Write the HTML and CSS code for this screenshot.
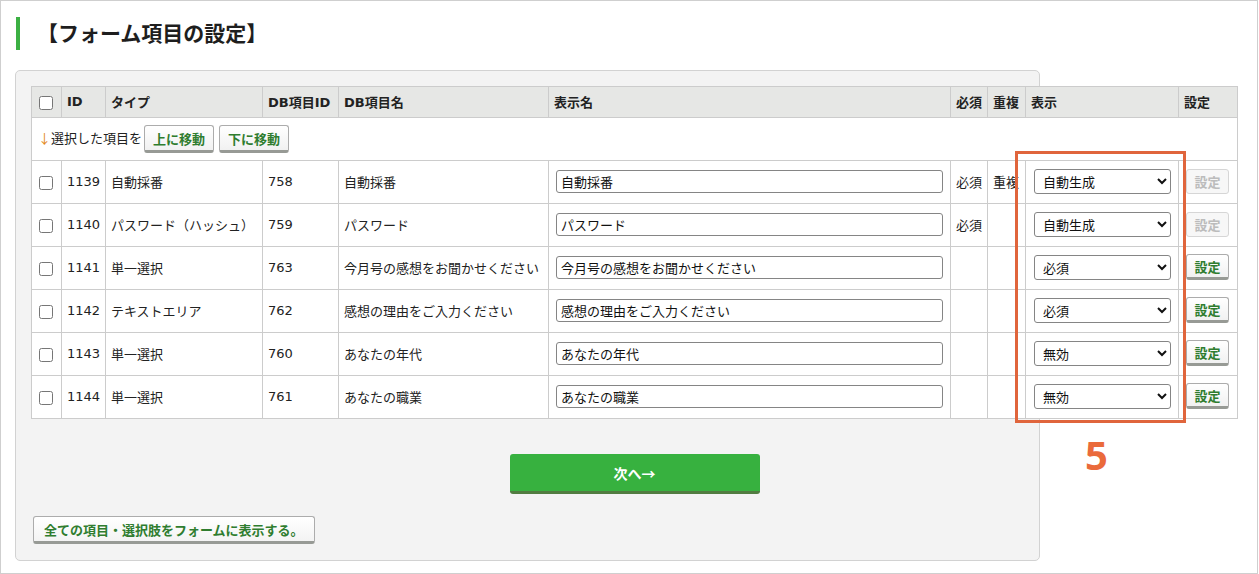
FILE: index.html
```html
<!DOCTYPE html>
<html lang="ja">
<head>
<meta charset="utf-8">
<title>フォーム項目の設定</title>
<link rel="stylesheet" href="styles.css">
</head>
<body>
<div class="frame">
  <h2 class="heading">【フォーム項目の設定】</h2>
  <div class="panel">
    <div class="inner">
      <table class="items">
        <colgroup>
          <col class="c-chk"><col class="c-id"><col class="c-type"><col class="c-dbid"><col class="c-dbname"><col class="c-label"><col class="c-req"><col class="c-dup"><col class="c-show"><col class="c-set">
        </colgroup>
        <thead>
          <tr>
            <th class="chk"><input type="checkbox"></th>
            <th>ID</th>
            <th>タイプ</th>
            <th>DB項目ID</th>
            <th>DB項目名</th>
            <th>表示名</th>
            <th>必須</th>
            <th>重複</th>
            <th>表示</th>
            <th>設定</th>
          </tr>
        </thead>
        <tbody>
          <tr class="move-row">
            <td colspan="10"><span class="arrow">↓</span>選択した項目を<button class="btn-move" type="button">上に移動</button><button class="btn-move" type="button">下に移動</button></td>
          </tr>
          <tr>
            <td class="chk"><input type="checkbox"></td>
            <td>1139</td>
            <td>自動採番</td>
            <td>758</td>
            <td>自動採番</td>
            <td class="lbl"><input class="txt" type="text" value="自動採番"></td>
            <td>必須</td>
            <td>重複</td>
            <td class="show"><select class="sel"><option>自動生成</option></select></td>
            <td class="set"><button class="btn-set" type="button" disabled>設定</button></td>
          </tr>
          <tr>
            <td class="chk"><input type="checkbox"></td>
            <td>1140</td>
            <td>パスワード（ハッシュ）</td>
            <td>759</td>
            <td>パスワード</td>
            <td class="lbl"><input class="txt" type="text" value="パスワード"></td>
            <td>必須</td>
            <td></td>
            <td class="show"><select class="sel"><option>自動生成</option></select></td>
            <td class="set"><button class="btn-set" type="button" disabled>設定</button></td>
          </tr>
          <tr>
            <td class="chk"><input type="checkbox"></td>
            <td>1141</td>
            <td>単一選択</td>
            <td>763</td>
            <td>今月号の感想をお聞かせください</td>
            <td class="lbl"><input class="txt" type="text" value="今月号の感想をお聞かせください"></td>
            <td></td>
            <td></td>
            <td class="show"><select class="sel"><option>必須</option></select></td>
            <td class="set"><button class="btn-set" type="button">設定</button></td>
          </tr>
          <tr>
            <td class="chk"><input type="checkbox"></td>
            <td>1142</td>
            <td>テキストエリア</td>
            <td>762</td>
            <td>感想の理由をご入力ください</td>
            <td class="lbl"><input class="txt" type="text" value="感想の理由をご入力ください"></td>
            <td></td>
            <td></td>
            <td class="show"><select class="sel"><option>必須</option></select></td>
            <td class="set"><button class="btn-set" type="button">設定</button></td>
          </tr>
          <tr>
            <td class="chk"><input type="checkbox"></td>
            <td>1143</td>
            <td>単一選択</td>
            <td>760</td>
            <td>あなたの年代</td>
            <td class="lbl"><input class="txt" type="text" value="あなたの年代"></td>
            <td></td>
            <td></td>
            <td class="show"><select class="sel"><option>無効</option></select></td>
            <td class="set"><button class="btn-set" type="button">設定</button></td>
          </tr>
          <tr>
            <td class="chk"><input type="checkbox"></td>
            <td>1144</td>
            <td>単一選択</td>
            <td>761</td>
            <td>あなたの職業</td>
            <td class="lbl"><input class="txt" type="text" value="あなたの職業"></td>
            <td></td>
            <td></td>
            <td class="show"><select class="sel"><option>無効</option></select></td>
            <td class="set"><button class="btn-set" type="button">設定</button></td>
          </tr>
        </tbody>
      </table>
      <div class="next-wrap">
        <button class="btn-next" type="button">次へ→</button>
      </div>
      <button class="btn-all" type="button">全ての項目・選択肢をフォームに表示する。</button>
    </div>
  </div>
  <div class="highlight"></div>
  <div class="step-num">5</div>
</div>
</body>
</html>
```

FILE: styles.css
```css
html, body {
  margin: 0;
  padding: 0;
  background: #ffffff;
}

body {
  font-family: "DejaVu Sans", "Noto Sans CJK JP", sans-serif;
  font-size: 13px;
  color: #222222;
}

.frame {
  position: relative;
  width: 1258px;
  height: 574px;
  box-sizing: border-box;
  border: 1px solid #cfcfcf;
  padding-top: 16px;
  overflow: hidden;
}

.heading {
  margin: 0 0 0 15px;
  height: 33px;
  box-sizing: border-box;
  border-left: 4px solid #3cb043;
  padding-left: 17px;
  font-family: "Noto Sans CJK JP", sans-serif;
  font-size: 21px;
  font-weight: bold;
  line-height: 30px;
  color: #1e1e1e;
}

.panel {
  margin: 20px 0 0 14px;
  width: 1025px;
  height: 491px;
  box-sizing: border-box;
  border: 1px solid #d2d2d2;
  border-radius: 5px;
  background: #f3f3f3;
  padding: 15px;
}

.inner {
  width: 1207px;
}

.items {
  border-collapse: collapse;
  table-layout: fixed;
  width: 1207px;
  background: #ffffff;
}

.c-chk { width: 30px; }
.c-id { width: 44px; }
.c-type { width: 157px; }
.c-dbid { width: 76px; }
.c-dbname { width: 210px; }
.c-label { width: 402px; }
.c-req { width: 37px; }
.c-dup { width: 38px; }
.c-show { width: 153px; }
.c-set { width: 59px; }

.items th,
.items td {
  border: 1px solid #cccccc;
  padding: 0 5px;
  text-align: left;
  white-space: nowrap;
  overflow: visible;
}

.items th {
  height: 29px;
  padding-bottom: 1px;
  background: #e6e7e5;
  font-weight: bold;
}

.items td {
  height: 40px;
  padding-bottom: 2px;
}

.items .chk {
  padding: 0;
  text-align: center;
}

.items input[type="checkbox"] {
  width: 14px;
  height: 14px;
  margin: 2px 1px 0 0;
  vertical-align: middle;
}

.move-row td {
  height: 42px;
  padding: 0 0 0 6px;
}

.arrow {
  font-family: "Noto Sans CJK JP", sans-serif;
  color: #e38a1c;
}

.btn-move {
  height: 28px;
  margin-left: 2px;
  padding: 0 8px;
  box-sizing: border-box;
  border: 1px solid #acacac;
  border-bottom: 3px solid #979a95;
  border-radius: 3px;
  background: linear-gradient(#ffffff, #f1f1f1);
  font-family: "Noto Sans CJK JP", sans-serif;
  font-size: 13px;
  font-weight: bold;
  color: #2f7d2f;
  vertical-align: middle;
}

.btn-move + .btn-move {
  margin-left: 5px;
}

.items td.lbl {
  padding: 0 0 2px 7px;
}

.txt {
  width: 387px;
  height: 23px;
  box-sizing: border-box;
  border: 1px solid #858585;
  border-radius: 3px;
  padding: 0 4px;
  font-family: "Noto Sans CJK JP", sans-serif;
  font-size: 13px;
  color: #111111;
  background: #ffffff;
}

.items td.show {
  padding: 0 0 2px 8px;
}

.sel {
  width: 137px;
  height: 25px;
  box-sizing: border-box;
  border: 1px solid #858585;
  border-radius: 3px;
  padding: 0 4px;
  font-family: "Noto Sans CJK JP", sans-serif;
  font-size: 13px;
  color: #111111;
  background: #ffffff;
}

.items td.set {
  padding: 0 0 2px 7px;
}

.btn-set {
  width: 43px;
  height: 26px;
  box-sizing: border-box;
  padding: 0;
  border: 1px solid #acacac;
  border-bottom: 3px solid #979a95;
  border-radius: 3px;
  background: linear-gradient(#ffffff, #f1f1f1);
  font-family: "Noto Sans CJK JP", sans-serif;
  font-size: 13px;
  font-weight: bold;
  color: #2f7d2f;
}

.btn-set:disabled {
  height: 25px;
  border: 1px solid #d6d6d6;
  background: #f7f7f7;
  color: #bcbcbc;
}

.next-wrap {
  display: flex;
  justify-content: center;
  margin-top: 35px;
}

.btn-next {
  width: 250px;
  height: 40px;
  box-sizing: border-box;
  border: 0;
  border-bottom: 3px solid #527c41;
  border-radius: 3px;
  background: #37b13f;
  font-family: "Noto Sans CJK JP", sans-serif;
  font-size: 14px;
  font-weight: bold;
  color: #ffffff;
}

.btn-all {
  display: block;
  margin: 22px 0 0 2px;
  height: 28px;
  box-sizing: border-box;
  padding: 0 10px;
  border: 1px solid #acacac;
  border-bottom: 3px solid #979a95;
  border-radius: 3px;
  background: linear-gradient(#ffffff, #f3f3f3);
  font-family: "Noto Sans CJK JP", sans-serif;
  font-size: 13px;
  font-weight: bold;
  color: #2f7d2f;
}

.highlight {
  position: absolute;
  left: 1014px;
  top: 150px;
  width: 171px;
  height: 272px;
  box-sizing: border-box;
  border: 3px solid #e0653c;
}

.step-num {
  position: absolute;
  left: 1084px;
  top: 429px;
  font-family: "Open Sans", sans-serif;
  font-size: 40px;
  font-weight: bold;
  line-height: 50px;
  color: #ea6a3b;
}
```
